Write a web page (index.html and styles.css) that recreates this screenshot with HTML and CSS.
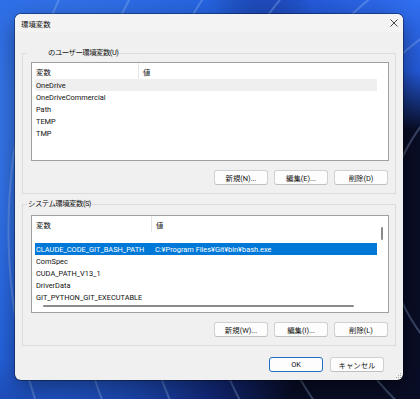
FILE: index.html
```html
<!DOCTYPE html>
<html lang="ja">
<head>
    <meta charset="UTF-8">
    <title>環境変数</title>
    <link rel="stylesheet" href="styles.css">
</head>
<body>
<div class="dialog">
    <div class="titlebar">
        <span>環境変数</span>
        <svg class="close" width="8" height="8" viewBox="0 0 8 8">
            <path d="M0.5 0.5 L7.5 7.5 M7.5 0.5 L0.5 7.5" stroke="#333" stroke-width="0.9" fill="none"/>
        </svg>
    </div>

    <div class="content">
        <fieldset class="group group-user">
            <legend><span class="username"></span>のユーザー環境変数(U)</legend>
            <div class="list list-user">
                <div class="list-header">
                    <div>変数</div>
                    <div class="col-val">値</div>
                </div>
                <div class="row inactive"><div>OneDrive</div><div></div></div>
                <div class="row"><div>OneDriveCommercial</div><div></div></div>
                <div class="row"><div>Path</div><div></div></div>
                <div class="row"><div>TEMP</div><div></div></div>
                <div class="row"><div>TMP</div><div></div></div>
            </div>
            <div class="buttons">
                <button>新規(N)...</button>
                <button>編集(E)...</button>
                <button>削除(D)</button>
            </div>
        </fieldset>

        <fieldset class="group group-system">
            <legend>システム環境変数(S)</legend>
            <div class="list list-system">
                <div class="list-header">
                    <div>変数</div>
                    <div class="col-val">値</div>
                </div>
                <div class="spacer"></div>
                <div class="row selected"><div>CLAUDE_CODE_GIT_BASH_PATH</div><div class="val">C:¥Program Files¥Git¥bin¥bash.exe</div></div>
                <div class="row"><div>ComSpec</div><div></div></div>
                <div class="row"><div>CUDA_PATH_V13_1</div><div></div></div>
                <div class="row"><div>DriverData</div><div></div></div>
                <div class="row"><div>GIT_PYTHON_GIT_EXECUTABLE</div><div></div></div>
                <div class="hscroll"></div>
                <div class="vthumb"></div>
            </div>
            <div class="buttons">
                <button>新規(W)...</button>
                <button>編集(I)...</button>
                <button>削除(L)</button>
            </div>
        </fieldset>

        <div class="footer">
            <button class="primary">OK</button>
            <button>キャンセル</button>
        </div>
    </div>

    <svg class="grip" width="5" height="5" viewBox="0 0 5 5">
        <rect x="4" y="0" width="1" height="1" fill="#aaa"/>
        <rect x="2" y="2" width="1" height="1" fill="#aaa"/>
        <rect x="4" y="2" width="1" height="1" fill="#aaa"/>
        <rect x="0" y="4" width="1" height="1" fill="#aaa"/>
        <rect x="2" y="4" width="1" height="1" fill="#aaa"/>
        <rect x="4" y="4" width="1" height="1" fill="#aaa"/>
    </svg>
</div>
</body>
</html>
```

FILE: styles.css
```css
* {
    box-sizing: border-box;
}

body {
    margin: 0;
    padding: 14px 0 0 15px;
    width: 420px;
    height: 399px;
    overflow: hidden;
    font-family: Roboto, "Noto Sans CJK JP", sans-serif;
    font-size: 7.4px;
    color: #111;
    background:
        repeating-radial-gradient(circle at 560px 230px, transparent 0 46px, rgba(170, 205, 255, 0.3) 47px 48px, transparent 49px 63px),
        radial-gradient(ellipse 200px 130px at 100% 0%, #3170f2 0%, #2459d8 55%, transparent 100%),
        radial-gradient(ellipse 330px 450px at 12% 30%, #3a7cf0 0%, #2563e0 55%, rgba(24, 60, 180, 0.6) 78%, transparent 95%),
        #090d26;
}

.dialog {
    position: relative;
    width: 388px;
    height: 366px;
    background: #f0f0f0;
    border-radius: 6px;
    overflow: hidden;
    box-shadow: 0 0 0 1px rgba(0, 0, 0, 0.35), 0 8px 24px rgba(0, 0, 0, 0.45);
}

.titlebar {
    height: 18px;
    padding: 0 5px 0 6px;
    display: flex;
    align-items: center;
    justify-content: space-between;
    background: #f3f3f3;
}

.content {
    padding: 15px 7px 0 7px;
}

.group {
    margin: 0;
    padding: 3px 6px 8px 8px;
    border: 1px solid #dcdcdc;
}

.group legend {
    margin-left: -4px;
    padding: 0 1px;
    line-height: 12px;
    letter-spacing: -0.5px;
}

.username {
    display: inline-block;
    width: 20px;
}

.group-system {
    margin-top: 4px;
    padding-top: 5px;
}

.list {
    position: relative;
    background: #ffffff;
    border: 1px solid #a0a0a0;
    padding-right: 11px;
}

.list-user {
    height: 99px;
}

.list-system {
    height: 98px;
}

.list-header {
    display: grid;
    height: 16px;
    align-items: center;
}

.list-header > div {
    height: 100%;
    display: flex;
    align-items: center;
    padding-left: 4px;
}

.list-header .col-val {
    border-left: 1px solid #e5e5e5;
    padding-left: 4px;
}

.list-user .list-header {
    grid-template-columns: 106px 1fr;
}

.list-system .list-header {
    grid-template-columns: 119px 1fr;
}

.spacer {
    height: 11px;
}

.row {
    display: grid;
    height: 12px;
    margin-left: 3px;
    align-items: center;
    white-space: nowrap;
}

.row > div {
    padding-left: 1px;
}

.list-user .row {
    grid-template-columns: 103px 1fr;
}

.list-system .row {
    grid-template-columns: 116px 1fr;
}

.row .val {
    padding-left: 4px;
}

.row.inactive {
    background: #efefef;
}

.row.selected {
    background: #0078d7;
    color: #ffffff;
}

.hscroll {
    height: 2px;
    margin: 2px 0 0 11px;
    width: 311px;
    background: #8a8a8a;
    border-radius: 1px;
}

.vthumb {
    position: absolute;
    right: 5px;
    top: 11px;
    width: 2px;
    height: 13px;
    background: #8a8a8a;
    border-radius: 1px;
}

.buttons {
    display: flex;
    justify-content: flex-end;
    gap: 6px;
    margin-top: 9px;
    padding-right: 1px;
}

button {
    width: 54px;
    height: 15px;
    padding: 0;
    font-family: inherit;
    font-size: 7.4px;
    color: #111;
    background: #fdfdfd;
    border: 1px solid #d0d0d0;
    border-bottom-color: #c0c0c0;
    border-radius: 3px;
}

.footer {
    display: flex;
    justify-content: flex-end;
    gap: 7px;
    margin: 11px 12px 0 0;
}

.footer button {
    height: 15px;
}

button.primary {
    border: 1px solid #1c6fc6;
}

.grip {
    position: absolute;
    right: 2px;
    bottom: 2px;
}
```
